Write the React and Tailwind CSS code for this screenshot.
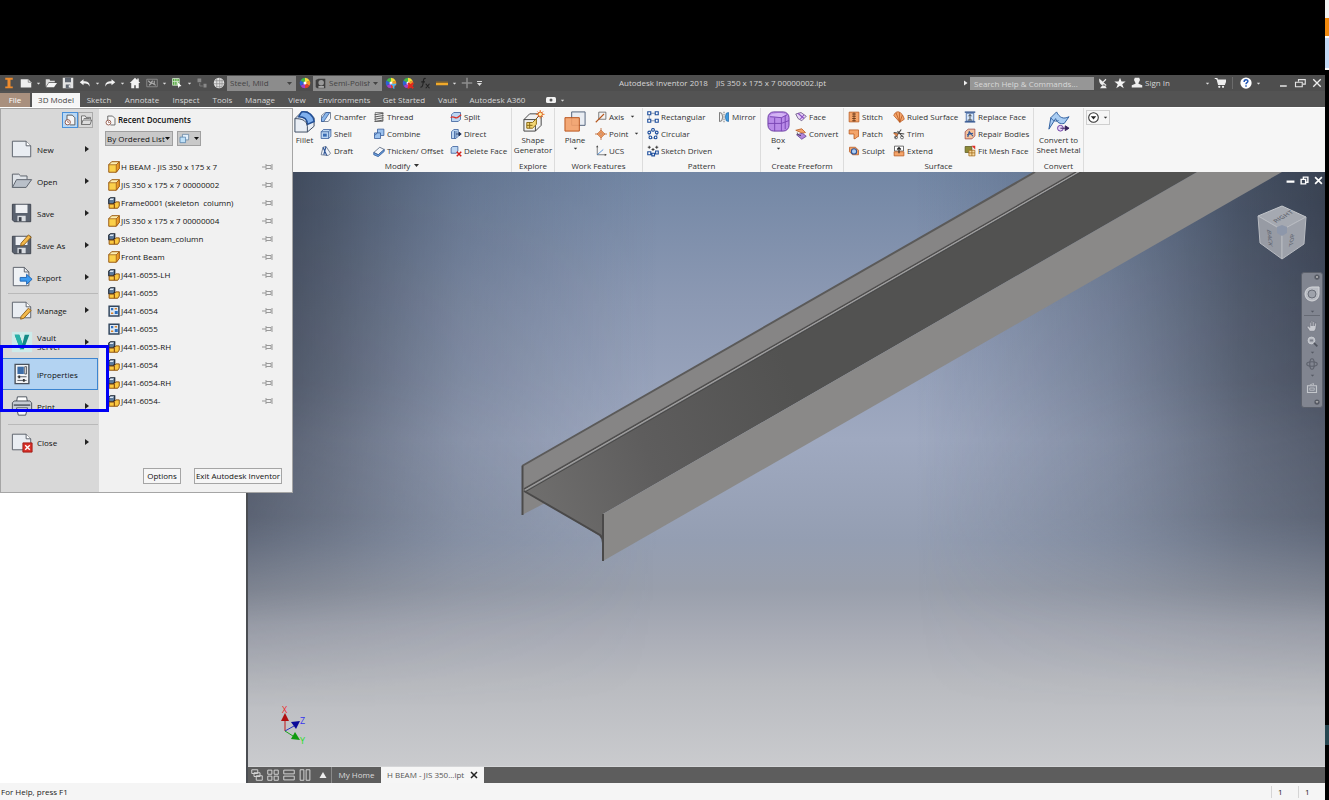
import React, { useState } from 'react';

const Svg = ({ size = 12, box = 16, children, className = '' }) => (
  <svg width={size} height={size} viewBox={`0 0 ${box} ${box}`} className={`shrink-0 ${className}`} fill="none" aria-hidden="true">
    {children}
  </svg>
);

const Caret = ({ className = '' }) => (
  <svg width="5" height="3" viewBox="0 0 5 3" className={`shrink-0 ${className}`} aria-hidden="true">
    <path d="M0 0h5L2.5 3z" fill="currentColor" />
  </svg>
);

const B = '#2f5597'; // outline blue
const L = '#bcd6f2'; // light blue face
const O = '#f4a56b'; // orange face
const D = '#b5561c'; // orange outline

/* ---------- ribbon icons ---------- */
const icons = {
  chamfer: <><path d="M2 6l5-4h7v8l-3 4H2z" fill="#f4f6f9" stroke="#54647c" /><path d="M2 10L8 2h5L5 14H2z" fill="#8db8ea" stroke={B} /></>,
  shell: <><path d="M1.5 5l3-3h10v9l-3 3h-10z" fill={L} stroke={B} /><path d="M1.5 5h10v9M11.500 5l3-3" stroke={B} /><path d="M4 7.500h5v4H4z" fill="#3b6db5" /></>,
  draft: <><path d="M1.500 13L4 3l4-1 6 9-3 3z" fill="#f0f3f8" stroke="#54647c" /><path d="M4 3l5 11M8 2l-3 11" stroke={B} strokeWidth="1.500" /></>,
  thread: <><path d="M3 2h10v12H3z" fill="#eee" stroke="#666" /><path d="M2 5l12-2M2 8l12-2M2 11l12-2M2 14l12-2" stroke="#555" strokeWidth="1.300" /></>,
  combine: <><path d="M6 1.500h8.500V10H10v4H2V6.500h4z" fill="#9cc2ee" stroke={B} /><path d="M6 6.500h4V10M6 6.500L2 10" stroke={B} /></>,
  thicken: <><path d="M1 10l8-7 6 3-8 7z" fill="#f5f7fa" stroke="#4a5a74" /><path d="M1 10v3l6 2.500 8-7V6l-8 7z" fill="#6fa5e0" stroke={B} /></>,
  split: <><path d="M2 5l3-3h9v9l-3 3H2z" fill={L} stroke={B} /><path d="M1 9c4-4 6 3 10-1l4-3" stroke="#d9332a" strokeWidth="1.800" /></>,
  direct: <><path d="M2 5l3-3h6v9l-3 3H2z" fill={L} stroke={B} /><path d="M6 4v10M8 4v9" stroke={B} /><path d="M8 8h6M12 5.500L15 8l-3 2.500z" stroke="#1b2f55" fill="#1b2f55" /></>,
  deleteFace: <><path d="M1.500 4l2-2h7v6l-2 3h-7z" fill={L} stroke={B} /><path d="M9 9l6 6M15 9l-6 6" stroke="#d3211b" strokeWidth="2" /></>,
  axis: <><path d="M5 1.500h9.500V11H5z" fill="#f4f4f4" stroke="#555" /><path d="M1 15L12 4" stroke={D} strokeWidth="1.500" /></>,
  point: <><path d="M8 0v16M0 8h16" stroke={D} /><path d="M8 3l5 5-5 5-5-5z" fill={O} stroke={D} /><circle cx="8" cy="8" r="1.500" fill="#fff" stroke={D} /></>,
  ucs: <><path d="M3 1v12h12" stroke="#555" /><path d="M3 13l8-7" stroke="#2b7ad1" /><path d="M1.500 3L3 .5 4.500 3zM13 11.500l2.500 1.500-2.500 1.500z" fill="#444" /></>,
  rectangular: <><path d="M4 3h8M4 13h8M3 4v8" stroke="#6b7d9b" /><g fill="#fff" stroke="#20509e" strokeWidth="1.500"><path d="M1 1h4v4H1zM11 1h4v4h-4zM1 11h4v4H1zM11 11h4v4h-4z" /></g></>,
  circular: <><circle cx="8" cy="8" r="5.500" stroke="#6b7d9b" /><g fill="#fff" stroke="#20509e" strokeWidth="1.500"><circle cx="8" cy="2.500" r="1.800" /><circle cx="3" cy="6" r="1.800" /><circle cx="13" cy="6" r="1.800" /><circle cx="4.500" cy="12.500" r="1.800" /><circle cx="11.500" cy="12.500" r="1.800" /></g></>,
  sketchDriven: <><path d="M3 1v4M1 3h4M8 4v4M6 6h4M13 1v4M11 3h4" stroke="#333" strokeWidth="1.200" /><g fill="#fff" stroke="#20509e" strokeWidth="1.500"><path d="M1 9h4v4H1zM6.500 11h3.500v3.500H6.500zM11.500 8H15v4h-3.500z" /></g></>,
  mirror: <><path d="M2 2v12l3-1 1-4V7L5 3z" fill="#f3f3f3" stroke="#555" /><path d="M8 1v14" stroke="#555" strokeDasharray="2 1" /><path d="M14 2v12l-3-1-1-4V7l1-4z" fill="#3e9be0" stroke="#2269aa" /></>,
  face: <><path d="M1 4l7-2 7 5-6 6-5-3z" fill="#e6d4f5" stroke="#5c4a78" /><path d="M4 3l8 7M12 5l-5 6" stroke="#8b51c4" strokeWidth="1.500" /></>,
  convert: <><path d="M1 3l8-2 5 5-4 1z" fill={O} stroke={D} /><path d="M2 9l8-2 5 4-6 4z" fill="#b287dd" stroke="#5f3e8f" /><path d="M3 6c0 3 2 4 5 4" stroke="#333" /></>,
  stitch: <><path d="M1.500 1.500h13v13h-13z" fill={O} stroke={D} /><path d="M8 2v12M5.500 4h5M5.500 7h5M5.500 10h5M5.500 13h5" stroke="#5a2c10" /></>,
  patch: <><path d="M1.500 2.500h12.500v9c-3 0-3 3-6 3V8H1.500z" fill={O} stroke={D} /></>,
  sculpt: <><path d="M2 3h8l4 4v6H6l-4-4z" fill={O} stroke={D} /><circle cx="8" cy="8.500" r="3.500" fill="#a9ccf5" stroke={B} strokeWidth="1.500" /></>,
  ruled: <><path d="M1 6C2 3 4 1 7 1c4 1 7 5 8 10l-6 4z" fill={O} stroke={D} /><path d="M9 15L4 2.500M9 15L8.500 2M9 15l3.500-9.500" stroke={D} /></>,
  trim: <><path d="M1 6l14 2M3 13L11 2" stroke="#444" strokeWidth="1.500" /><circle cx="4" cy="12.500" r="2" stroke="#444" /><circle cx="12" cy="12.500" r="2" stroke="#444" /><path d="M6 4l7 8" stroke="#444" strokeWidth="1.500" /><path d="M1 7l5 1-1 3z" fill={O} stroke={D} /></>,
  extend: <><path d="M2 1.500h12V8H2z" fill="#fff" stroke="#444" /><path d="M1.500 9h13v5.500h-13z" fill={O} stroke={D} /><path d="M8 11V4M5.500 6L8 3.500 10.500 6" stroke="#222" strokeWidth="1.500" /></>,
  replaceFace: <><path d="M3 3h10v10.500H3z" fill="#d4e6fb" stroke={B} /><path d="M1 1.500h14M1 14.500h14" stroke="#1f4585" strokeWidth="1.500" /><path d="M8 12V5M6 7l2-2.500L10 7M5 12h6" stroke="#222" /></>,
  repair: <><path d="M1.500 5l4-3.500h9v9l-4 4h-9z" fill="#f6c39c" stroke="#944" /><path d="M5 12l2-7 5 6M4 9l8-2" stroke={B} strokeWidth="1.500" /></>,
  fitMesh: <><path d="M1.500 2h9v8h-9z" fill="#8d8b38" stroke="#5a581f" /><path d="M6.500 7h8v7.500h-8z" fill="#f7dba0" stroke="#a06718" /><path d="M6.500 10.500h8M10.500 7v7.500" stroke="#a06718" /><path d="M10 1h5v5z" fill="#df2f24" /></>,
};

const Tool = ({ icon, label, caret }) => (
  <button className="flex h-[17px] shrink-0 items-center gap-[2px] whitespace-nowrap text-left">
    <Svg size={12}>{icons[icon]}</Svg>
    <span>{label}</span>
    {caret && <Caret className="ml-1 scale-75" />}
  </button>
);

const Group = ({ title, width, caret, children }) => (
  <section className={`flex shrink-0 flex-col border-r border-[#dcdcdc] ${width}`}>
    <div className="flex h-[51px]">{children}</div>
    <div className="flex h-[13px] items-center justify-center gap-1">
      {title}
      {caret && <Caret />}
    </div>
  </section>
);

const Col = ({ width = '', children }) => <div className={`flex shrink-0 flex-col ${width}`}>{children}</div>;

const BigTool = ({ width, children, lines, caret }) => (
  <button className={`flex shrink-0 flex-col items-center self-start pt-[2px] leading-[10px] ${width}`}>
    {children}
    {lines.map((l) => (
      <span key={l} className="whitespace-nowrap">{l}</span>
    ))}
    {caret && <Caret className="mt-[2px] scale-75" />}
  </button>
);

const Ribbon = () => (
  <div className="flex h-[65px] overflow-hidden border-t border-white bg-[#f6f6f6] pl-[293px] text-[#333]">
    <Group title="Modify" width="w-[219px]" caret>
      <BigTool width="w-[23px]" lines={['Fillet']}>
        <Svg size={23} box={24} className="mb-[2px]">
          <path d="M2 9l7-7h6l7 6v9l-7 6H2z" fill="#e9eef5" stroke="#3c4a61" />
          <path d="M9 2c7-1 12 3 13 10l-7 3c0-5-3-8-9-8z" fill="#7fb0ee" stroke="#214e96" strokeWidth="1.500" />
          <path d="M2 9c6 0 12 1 13 8v6" stroke="#3c4a61" />
        </Svg>
      </BigTool>
      <Col width="w-[57px] pl-1">
        <Tool icon="chamfer" label="Chamfer" />
        <Tool icon="shell" label="Shell" />
        <Tool icon="draft" label="Draft" />
      </Col>
      <Col width="w-[77px]">
        <Tool icon="thread" label="Thread" />
        <Tool icon="combine" label="Combine" />
        <Tool icon="thicken" label="Thicken/ Offset" />
      </Col>
      <Col>
        <Tool icon="split" label="Split" />
        <Tool icon="direct" label="Direct" />
        <Tool icon="deleteFace" label="Delete Face" />
      </Col>
    </Group>

    <Group title="Explore" width="w-[43px]">
      <BigTool width="w-[42px]" lines={['Shape', 'Generator']}>
        <Svg size={23} box={24} className="mb-[2px]">
          <path d="M2 10l6-6h12v12l-6 6H2z" fill="#f1f1f1" stroke="#444" />
          <path d="M2 10h12v12M14 10l6-6" stroke="#444" />
          <path d="M5 13h6l4-4v6l-4 4H5z" fill="#f2d675" stroke="#8a6a13" />
          <path d="M5 16h6M8 13v6" stroke="#8a6a13" />
          <path d="M19 0v9M14.500 4.500h9M16 1.500l6 6M22 1.500l-6 6" stroke="#e8731c" />
          <circle cx="19" cy="4.500" r="2.300" fill="#fff3a8" stroke="#d8541a" />
        </Svg>
      </BigTool>
    </Group>

    <Group title="Work Features" width="w-[88px]">
      <BigTool width="w-[40px]" lines={['Plane']} caret>
        <Svg size={23} box={24} className="mb-[2px]">
          <path d="M8 2h14v14H8z" fill="#e9edf3" stroke="#52617a" />
          <path d="M1 8h15v14H1z" fill="#f3a068" stroke="#b9531a" fillOpacity=".9" />
        </Svg>
      </BigTool>
      <Col>
        <Tool icon="axis" label="Axis" caret />
        <Tool icon="point" label="Point" caret />
        <Tool icon="ucs" label="UCS" />
      </Col>
    </Group>

    <Group title="Pattern" width="w-[118px]">
      <Col width="w-[75px] pl-1">
        <Tool icon="rectangular" label="Rectangular" />
        <Tool icon="circular" label="Circular" />
        <Tool icon="sketchDriven" label="Sketch Driven" />
      </Col>
      <Col>
        <Tool icon="mirror" label="Mirror" />
      </Col>
    </Group>

    <Group title="Create Freeform" width="w-[83px]">
      <BigTool width="w-[34px]" lines={['Box']} caret>
        <Svg size={23} box={24} className="mb-[2px]">
          <rect x="1" y="2" width="22" height="20" rx="6" fill="#b98be8" stroke="#6a3ba1" />
          <path d="M3 6c2-3 14-4 17-1l-5 3c-4-1-8-1-12-2z" fill="#d3b4f4" />
          <path d="M1 14h14l8-3M8 8v14M15 8v14M19 6v14M3 7l12 1 6-3" stroke="#7a47b5" />
        </Svg>
      </BigTool>
      <Col>
        <Tool icon="face" label="Face" />
        <Tool icon="convert" label="Convert" />
      </Col>
    </Group>

    <Group title="Surface" width="w-[190px]">
      <Col width="w-[49px] pl-1">
        <Tool icon="stitch" label="Stitch" />
        <Tool icon="patch" label="Patch" />
        <Tool icon="sculpt" label="Sculpt" />
      </Col>
      <Col width="w-[71px]">
        <Tool icon="ruled" label="Ruled Surface" />
        <Tool icon="trim" label="Trim" />
        <Tool icon="extend" label="Extend" />
      </Col>
      <Col>
        <Tool icon="replaceFace" label="Replace Face" />
        <Tool icon="repair" label="Repair Bodies" />
        <Tool icon="fitMesh" label="Fit Mesh Face" />
      </Col>
    </Group>

    <Group title="Convert" width="w-[50px]">
      <BigTool width="w-[49px]" lines={['Convert to', 'Sheet Metal']}>
        <Svg size={23} box={24} className="mb-[2px]">
          <path d="M2 20L4 8l6-6c3 6 7 8 13 5l-5 7c-4 1-8-1-9-5z" fill="#a9cdf3" stroke="#2f5f9f" />
          <path d="M4 8c2 4 6 4 8 3" stroke="#2f5f9f" />
          <circle cx="14" cy="19" r="3" fill="#e5d4f7" stroke="#6a3ba1" />
          <path d="M14 19h8M19 16.500l4 2.500-4 2.500z" stroke="#35205c" fill="#35205c" />
        </Svg>
      </BigTool>
    </Group>

    <button aria-label="Ribbon options" className="ml-[2px] mt-[2px] flex h-[15px] w-6 items-center justify-center gap-1 border border-[#cfcfcf]">
      <Svg size={11}>
        <circle cx="8" cy="8" r="7" fill="#fff" stroke="#333" strokeWidth="1.500" />
        <path d="M4 6h8l-4 5z" fill="#222" />
      </Svg>
      <Caret className="scale-75" />
    </button>
  </div>
);

/* ---------- title bar ---------- */
const Slot = ({ label, children }) => (
  <button aria-label={label} className="flex h-full w-[17px] shrink-0 items-center justify-center">
    <Svg size={12}>{children}</Svg>
  </button>
);

const CaretSlot = ({ label }) => (
  <button aria-label={label} className="flex h-full w-2 shrink-0 items-center justify-center text-[#ddd]">
    <Caret className="scale-75" />
  </button>
);

const Wheel = () => (
  <>
    <path d="M8 8V1a7 7 0 0 1 6 3.500z" fill="#f6e13a" />
    <path d="M8 8l6-3.500a7 7 0 0 1 0 7z" fill="#f39a27" />
    <path d="M8 8l6 3.500A7 7 0 0 1 8 15z" fill="#e2402b" />
    <path d="M8 8v7a7 7 0 0 1-6-3.500z" fill="#a340c8" />
    <path d="M8 8l-6 3.500a7 7 0 0 1 0-7z" fill="#2c62d6" />
    <path d="M8 8L2 4.500A7 7 0 0 1 8 1z" fill="#42b94c" />
    <circle cx="8" cy="8" r="2" fill="#fff" />
  </>
);

const TitleSelect = ({ label, value, icon }) => (
  <div className="relative flex h-[15px] w-[69px] shrink-0 items-center bg-[#8c8c8c] text-[#444]">
    {icon}
    <select aria-label={label} className="mr-3 h-full min-w-0 flex-1 appearance-none overflow-hidden text-clip pl-[3px] outline-none">
      <option>{value}</option>
    </select>
    <Caret className="pointer-events-none absolute right-1" />
  </div>
);

const TitleBar = () => (
  <header className="flex h-4 items-center bg-[#4e4e4e] text-[#d6d6d6]">
    <Slot label="Application"><path d="M3 1h10v2.500h-3v9h3V15H3v-2.500h3v-9H3z" fill="#ee8b2d" /></Slot>
    <Slot label="New"><path d="M1 3h10l4 4v7H1z" fill="#eee" /><path d="M11 3v4h4" stroke="#777" /></Slot>
    <CaretSlot label="New options" />
    <Slot label="Open"><path d="M1 13V3h5l1 2h6v2H5z" fill="#ddd" /><path d="M5 8h11l-4 5.500H1.500z" fill="#f5f5f5" /></Slot>
    <Slot label="Save"><path d="M1 1h14v14H1z" fill="#e4e4e4" /><path d="M4 1h8v6H4zM5 10h6v5H5z" fill="#5f6670" /><path d="M9 11h2v3H9z" fill="#eee" /></Slot>
    <Slot label="Undo"><path d="M6 3L1 7l5 4V8.500c4 0 7 0 8 4.500 1-6-3-7.500-8-7.500z" fill="#f2f2f2" /></Slot>
    <CaretSlot label="Undo options" />
    <Slot label="Redo"><path d="M10 3l5 4-5 4V8.500c-4 0-7 0-8 4.500-1-6 3-7.500 8-7.500z" fill="#f2f2f2" /></Slot>
    <CaretSlot label="Redo options" />
    <Slot label="Home"><path d="M8 1L1 8h2v7h4v-4h2v4h4V8h2l-2-2V2h-2v2z" fill="#f2f2f2" /></Slot>
    <Slot label="Appearance"><path d="M1 3h14v10H1z" stroke="#999" /><path d="M3 5l3 3 3-3M4 11l4-3 5 3M11 5v5" stroke="#aaa" strokeWidth="1.500" /></Slot>
    <CaretSlot label="Appearance options" />
    <Slot label="Select"><path d="M2 2h9v9H2z" fill="#58a943" stroke="#d7ead1" /><path d="M5 2v9M8 2v9M2 6h9" stroke="#d7ead1" /><path d="M8 6l6 6-3 .5L10 15z" fill="#fff" /></Slot>
    <CaretSlot label="Select options" />
    <Slot label="Relationships"><path d="M2 2h5v5H2zM10 9h4v5h-4z" fill="#898989" /><path d="M5 8v4h4" stroke="#898989" /></Slot>
    <Slot label="Material"><circle cx="8" cy="8" r="7" fill="#e4e4e4" /><path d="M2 5h12M1 9h14M4 13h8M5 2v12M9 1v14M12 3v10" stroke="#8b8b8b" /></Slot>
    <TitleSelect label="Material" value="Steel, Mild" />
    <Slot label="Color"><Wheel /></Slot>
    <TitleSelect
      label="Appearance"
      value="Semi-Polished"
      icon={<Svg size={11} className="ml-[2px]"><path d="M1 3l4-2h10v14H3L1 13z" fill="#3e3e3e" /><circle cx="9" cy="7" r="4" fill="#999" /><path d="M5 13h8" stroke="#ccc" strokeWidth="2" /></Svg>}
    />
    <Slot label="Adjust"><Wheel /><path d="M7 9h9l-3.500 3v4l-2-1v-3z" fill="#49b4ee" /></Slot>
    <Slot label="Clear"><Wheel /><path d="M8 8l7 7M15 8l-7 7" stroke="#e1261c" strokeWidth="2.500" /></Slot>
    <Slot label="Parameters"><path d="M9 2C6 1 6 4 5.500 8S4 14 2 13.500M3 6.500h5M9 9l5 6M14 9l-5 6" stroke="#222" strokeWidth="1.500" /></Slot>
    <Slot label="Measure"><path d="M0 6h16v2H0z" fill="#8d6a2c" /><path d="M0 8h16v3H0z" fill="#f0a92a" /></Slot>
    <CaretSlot label="Measure options" />
    <Slot label="Add"><path d="M8 1v14M1 8h14" stroke="#8e8e8e" strokeWidth="2" /></Slot>
    <button aria-label="Customize" className="flex w-2 flex-col items-center gap-[1px] text-[#ddd]"><span className="h-px w-[5px] bg-[#ddd]" /><Caret /></button>

    <h1 className="flex flex-1 items-center justify-center gap-2 whitespace-nowrap">
      <span>Autodesk Inventor 2018</span>
      <span>JIS 350 x 175 x 7 00000002.ipt</span>
    </h1>

    <Svg size={8}><path d="M4 3l7 5-7 5z" fill="#eee" /></Svg>
    <input aria-label="Search help" placeholder="Search Help &amp; Commands..." className="h-[13px] w-[124px] bg-[#969696] px-1 outline-none placeholder:text-[#d8d8d8]" />
    <Slot label="Connect"><path d="M3 2l10 9c-6 2-11-2-10-9zM8 10l-4 5h9l-3-5z" fill="#eee" /><path d="M8 7l4-4" stroke="#eee" strokeWidth="1.500" /></Slot>
    <Slot label="Favorites"><path d="M8 1l2 5h5.500L11 9.500l2 5.500-5-3.500L3 15l2-5.500L.5 6H6z" fill="#f4f4f4" /></Slot>
    <Slot label="Account"><path d="M5 1h6l1 3-2 4v1l5 2v3H1v-3l5-2V8L4 4z" fill="#eee" /></Slot>
    <button className="w-[58px] text-left">Sign In</button>
    <CaretSlot label="Account options" />
    <Slot label="Store"><path d="M1 2h3l2 8h8l2-6H5" fill="#eee" stroke="#eee" strokeWidth="1.500" /><circle cx="7" cy="13" r="1.500" fill="#eee" /><circle cx="12" cy="13" r="1.500" fill="#eee" /></Slot>
    <span className="mx-1 h-3 w-px bg-[#6b6b6b]" />
    <Slot label="Help"><circle cx="8" cy="8" r="7.500" fill="#fff" /><path d="M5.500 6.500c0-4 5-3.500 5-1 0 2-2.500 2-2.500 4M8 11v2" stroke="#2257b5" strokeWidth="2" /></Slot>
    <CaretSlot label="Help options" />
    <div className="ml-3 flex h-full">
      <Slot label="Minimize"><path d="M4 12h9" stroke="#e5e5e5" strokeWidth="2" /></Slot>
      <Slot label="Restore"><path d="M6 6V3.500h9v6h-3M2 7h9v6H2z" stroke="#e5e5e5" strokeWidth="1.500" /></Slot>
      <Slot label="Close"><path d="M3 3l10 10M13 3L3 13" stroke="#eee" strokeWidth="1.800" /></Slot>
    </div>
  </header>
);

const tabs = [
  ['Sketch', 'w-[38px]'], ['Annotate', 'w-[48px]'], ['Inspect', 'w-[40px]'], ['Tools', 'w-[33px]'],
  ['Manage', 'w-[42px]'], ['View', 'w-[32px]'], ['Environments', 'w-[63px]'], ['Get Started', 'w-[56px]'],
  ['Vault', 'w-[31px]'], ['Autodesk A360', 'w-[69px]'],
];

const TabBar = () => (
  <nav className="flex h-4 items-stretch bg-[#535353] pt-[2px] text-[#d6d6d6]">
    <button className="w-[30px] bg-[#a9907e] text-white">File</button>
    <button className="ml-[2px] w-12 whitespace-nowrap bg-[#f6f6f6] text-[#444]">3D Model</button>
    {tabs.map(([name, w]) => (
      <button key={name} className={`whitespace-nowrap ${w}`}>{name}</button>
    ))}
    <button aria-label="Ribbon display" className="ml-[14px] flex items-center gap-1">
      <svg width="10" height="6" viewBox="0 0 10 6" aria-hidden="true"><rect width="10" height="6" rx="1.500" fill="#f2f2f2" /><circle cx="5" cy="3" r="1.500" fill="#555" /></svg>
      <Caret className="scale-75" />
    </button>
  </nav>
);

/* ---------- file menu ---------- */
const page = <path d="M1.500 3.500h15l5 5v12h-20z" fill="#e9edf2" stroke="#555c66" />;
const floppy = (
  <>
    <path d="M1.500 2.500h20v19h-18l-2-2z" fill="#5a626f" stroke="#3b414b" />
    <path d="M5 3h13v9H5z" fill="#eef0f3" />
    <path d="M7 15h9v6H7z" fill="#d9dde2" />
    <path d="M8.500 16.500h3V21h-3z" fill="#3b414b" />
  </>
);
const pencil = <path d="M11 15l8-9 3 2.500-8 8.500-3.500 1z" fill="#f3b94b" stroke="#8d5c14" />;

const menuIcons = {
  New: <>{page}<path d="M16.500 3.500v5h5" fill="#fff" stroke="#555c66" /></>,
  Open: <><path d="M1.500 19V4.500h7l2 2h7V10" fill="#dfe3e8" stroke="#555c66" /><path d="M6 10.500h16.500l-6 8.500h-15z" fill="#b9c0c9" stroke="#555c66" /></>,
  Save: floppy,
  'Save As': <>{floppy}<g transform="translate(0 -5)">{pencil}</g></>,
  Export: <><path d="M2.500 1.500h12l5 5v15h-17z" fill="#eff2f5" stroke="#555c66" /><path d="M14.500 1.500v5h5" stroke="#555c66" /><path d="M10 12.500h7V9l6 5.500-6 5.500v-3.500h-7z" fill="#3b9bf1" stroke="#1b63b2" /></>,
  Manage: <>{page}<path d="M16.500 3.500v5h5" fill="#fff" stroke="#555c66" /><g transform="translate(0 4)">{pencil}</g></>,
  'Vault Server': <><path d="M1 1h22v22H1z" fill="#cdebea" /><path d="M4 4h5l3.500 10L15 4h5l-6 16h-4z" fill="#128a86" /><path d="M4 4h5l3.500 10L11 20h-1z" fill="#26b2a8" /></>,
  iProperties: <><path d="M4.500 1.500h15v21h-15z" fill="#f2f4f6" stroke="#4a515c" strokeWidth="1.500" /><path d="M7 4h7v8H7z" fill="#3d6da8" /><path d="M15 4h2v8h-2zM7 15h10M7 19h10" stroke="#4a515c" /><path d="M9 13.500v3M14 17.500v3" stroke="#333" strokeWidth="2" /></>,
  Print: <><path d="M6 8l1-6h10l1 6" fill="#fff" stroke="#444b55" /><path d="M1.500 8.500l2-2h17l2 2v8h-21z" fill="#c6ccd4" stroke="#444b55" /><path d="M6 14h12l-2 8H8z" fill="#f6f7f8" stroke="#444b55" /><path d="M3 11h18" stroke="#444b55" strokeWidth="1.500" /></>,
  Close: <>{page}<path d="M16.500 3.500v5h5" fill="#fff" stroke="#555c66" /><path d="M13 13h10v10H13z" fill="#d8312a" stroke="#a01914" /><path d="M15.500 15.500l5 5M20.500 15.500l-5 5" stroke="#fff" strokeWidth="1.500" /></>,
};

const MenuItem = ({ name, active, onPick }) => (
  <button
    onClick={() => onPick(name)}
    className={`flex h-8 w-full items-center border pl-2 text-left leading-[9px] ${
      active ? 'border-[#3d85d0] bg-[#b3d3f2]' : 'border-transparent'
    }`}
  >
    <Svg size={22} box={24}>{menuIcons[name]}</Svg>
    <span className="ml-1 w-[42px]">{name}</span>
    {name !== 'iProperties' && (
      <svg width="4" height="6" viewBox="0 0 4 6" className="ml-[6px]" aria-hidden="true"><path d="M0 0l4 3-4 3z" fill="#222" /></svg>
    )}
  </button>
);

const docs = [
  ['part', 'H BEAM - JIS 350 x 175 x 7'],
  ['part', 'JIS 350 x 175 x 7 00000002'],
  ['asm', 'Frame0001 (skeleton  column)'],
  ['part', 'JIS 350 x 175 x 7 00000004'],
  ['asm', 'Skleton beam_column'],
  ['part', 'Front Beam'],
  ['asm', 'J441-6055-LH'],
  ['asm', 'J441-6055'],
  ['dwg', 'J441-6054'],
  ['dwg', 'J441-6055'],
  ['asm', 'J441-6055-RH'],
  ['asm', 'J441-6054'],
  ['asm', 'J441-6054-RH'],
  ['asm', 'J441-6054-'],
];

const docIcons = {
  part: <><path d="M1 5l4-4h10v9l-4 5H1z" fill="#fbd04a" stroke="#9a5a14" strokeWidth="1.300" /><path d="M5 1h10l-4 4H1z" fill="#fdeeb0" stroke="#9a5a14" /><path d="M11 5l4-4v9l-4 5z" fill="#eb9c2a" stroke="#9a5a14" /></>,
  asm: <><path d="M1 3l2.500-2H9v6L7 9H1z" fill="#5c7a9c" stroke="#18222f" strokeWidth="1.500" /><path d="M3 2h5L6.500 4H2z" fill="#dfe8f2" /><path d="M1.500 9.500h7V15h-7zM8.500 9l2-2.500H15V12l-2 3H8.500z" fill="#fbc83f" stroke="#8f5410" strokeWidth="1.300" /></>,
  dwg: <><path d="M1.500 1.500h13v13h-13z" fill="#dce8f5" stroke="#33475f" strokeWidth="2" /><path d="M4 4h3v3H4zM9 8h4v4H9z" fill="#2d6fbf" /><path d="M9 4h3v2H9zM4 10h3v2H4z" fill="#d9832b" /></>,
};

const folderPage = (
  <>
    <path d="M4 9V1.500h7l3.500 3.500v9.500H8" fill="#f5f5f5" stroke="#555" strokeWidth="1.200" />
    <circle cx="5" cy="11" r="3.500" fill="#fff" stroke="#8b4a3a" strokeWidth="1.200" />
    <path d="M5 9v2h2" stroke="#8b4a3a" />
  </>
);

const FileMenu = () => {
  const [selected, setSelected] = useState('iProperties');
  const item = (name) => <MenuItem key={name} name={name} active={selected === name} onPick={setSelected} />;

  return (
    <div className="absolute left-0 top-px z-10 flex h-[385px] w-[293px] border border-[#a5a5a5] bg-[#f1f1f1] text-[#111]">
      <div className="w-[98px] shrink-0 bg-[#d8d8d8]">
        <div className="mb-[5px] ml-[61px] mt-[3px] flex h-4">
          <button aria-label="Recent documents" className="flex w-4 items-center justify-center border border-[#4a90d9] bg-[#b9d8f5]"><Svg size={12}>{folderPage}</Svg></button>
          <button aria-label="Open documents" className="flex w-[15px] items-center justify-center border border-[#aaa]">
            <Svg size={12}><path d="M2 14V2.500h5l1 2h6V7" fill="#eee" stroke="#555" /><path d="M4 8h11.500l-2 6H2zM5 6h8" fill="#ddd" stroke="#555" /></Svg>
          </button>
        </div>
        <div className="pl-px pr-px">
          {['New', 'Open', 'Save', 'Save As', 'Export'].map(item)}
          <hr className="ml-[6px] border-[#b9b9b9]" />
          {['Manage', 'Vault Server', 'iProperties', 'Print'].map(item)}
          <hr className="mb-px ml-[6px] mt-[2px] border-[#b9b9b9]" />
          {item('Close')}
        </div>
      </div>

      <div className="flex flex-1 flex-col pl-[6px] pr-[10px] pt-1">
        <h2 className="flex h-[14px] items-center gap-[2px] font-semibold">
          <Svg size={11}>{folderPage}</Svg>Recent Documents
        </h2>
        <div className="mb-3 mt-1 flex gap-1">
          <div className="relative flex h-[15px] w-[68px] items-center border border-[#a0a0a0] bg-[#c9c9c9]">
            <select aria-label="Sort order" className="h-full w-full appearance-none pl-px outline-none"><option>By Ordered List</option></select>
            <Caret className="pointer-events-none absolute right-[2px]" />
          </div>
          <button aria-label="Icon size" className="flex h-[15px] w-6 items-center justify-center gap-1 border border-[#a0a0a0] bg-[#c9c9c9]">
            <Svg size={11}><path d="M5 2h9v8H5z" fill="#e4f0fb" stroke="#5b7c9c" /><path d="M1.500 6h8v8h-8z" fill="#bfe0f7" stroke="#4a7ba8" /></Svg>
            <Caret />
          </button>
        </div>
        <ul className="pl-[3px]">
          {docs.map(([type, name], i) => (
            <li key={i} className="flex h-[18px] items-center gap-px pr-[9px]">
              <Svg size={12}>{docIcons[type]}</Svg>
              <a href="#" className="flex-1 whitespace-pre">{name}</a>
              <button aria-label={`Pin ${name}`}>
                <svg width="11" height="8" viewBox="0 0 11 8" fill="none" aria-hidden="true"><path d="M0 4h4M4 1v6M4 2.500h5v3H4M10 1v6" stroke="#999" /></svg>
              </button>
            </li>
          ))}
        </ul>
        <div className="mb-2 mt-auto flex justify-end gap-[13px]">
          <button className="h-4 w-[38px] border border-[#a5a5a5] bg-[#f6f6f6]">Options</button>
          <button className="h-4 w-[88px] whitespace-nowrap border border-[#a5a5a5] bg-[#f6f6f6]">Exit Autodesk Inventor</button>
        </div>
      </div>
      {/* highlight frame round iProperties */}
      <div className="pointer-events-none absolute -left-px top-[236px] h-[67px] w-[109px] border-3 border-[#0000f5]" />
    </div>
  );
};

/* ---------- model view ---------- */
const Scene = () => (
  <svg className="absolute inset-0 h-full w-full" viewBox="248 172 1077 595" preserveAspectRatio="xMinYMin slice" aria-label="H beam model">
    <defs>
      <linearGradient id="sky" x1="0" y1="0" x2="0" y2="1">
        <stop offset="0" stopColor="#7387a5" />
        <stop offset=".22" stopColor="#8c99b3" />
        <stop offset=".45" stopColor="#9fa9c0" />
        <stop offset=".62" stopColor="#949eb2" />
        <stop offset=".7" stopColor="#999fac" />
        <stop offset=".78" stopColor="#aaadb7" />
        <stop offset=".86" stopColor="#b9bbc0" />
        <stop offset="1" stopColor="#cacbce" />
      </linearGradient>
      <linearGradient id="sides">
        <stop offset="0" stopColor="#2a303d" stopOpacity=".82" />
        <stop offset=".08" stopColor="#2c3340" stopOpacity=".6" />
        <stop offset=".2" stopColor="#3a4558" stopOpacity=".28" />
        <stop offset=".38" stopColor="#4a5870" stopOpacity="0" />
        <stop offset=".62" stopColor="#4a5870" stopOpacity="0" />
        <stop offset=".8" stopColor="#3a4558" stopOpacity=".35" />
        <stop offset=".92" stopColor="#2c3340" stopOpacity=".65" />
        <stop offset="1" stopColor="#2a303d" stopOpacity=".8" />
      </linearGradient>
      <linearGradient id="fade" x1="0" y1="0" x2="0" y2="1">
        <stop offset="0" stopColor="#fff" />
        <stop offset=".35" stopColor="#e4e4e4" />
        <stop offset=".58" stopColor="#aaa" />
        <stop offset=".68" stopColor="#5c5c5c" />
        <stop offset=".76" stopColor="#242424" />
        <stop offset=".9" stopColor="#000" />
      </linearGradient>
      <mask id="fadeMask" maskUnits="userSpaceOnUse" x="248" y="172" width="1077" height="595">
        <rect x="248" y="172" width="1077" height="595" fill="url(#fade)" />
      </mask>
      <linearGradient id="web" gradientUnits="userSpaceOnUse" x1="525" y1="500" x2="800" y2="400">
        <stop offset="0" stopColor="#706f6e" />
        <stop offset=".45" stopColor="#5e5d5d" />
        <stop offset="1" stopColor="#525251" />
      </linearGradient>
    </defs>
    <rect x="248" y="172" width="1077" height="595" fill="url(#sky)" />
    <rect x="248" y="172" width="1077" height="595" fill="url(#sides)" mask="url(#fadeMask)" />

    {/* beam */}
    <path d="M522 466L1035 172h45L525 491v1l20 11-23 12z" fill="#868585" />
    <path d="M525 491L1080 172h117L603 514v24z" fill="url(#web)" />
    <path d="M603 514L1197 172h85L603 561z" fill="#8a8988" />
    <g fill="none">
      <path d="M522 466L1035 172" stroke="#5b5a59" strokeWidth="2" />
      <path d="M522.500 466v49" stroke="#4c4b4b" strokeWidth="2" />
      <path d="M524 489L1076 172" stroke="#4f4e4e" strokeWidth="1.500" />
      <path d="M525 490L1080 171" stroke="#a3a2a1" strokeWidth="1" />
      <path d="M525 492L1083 171" stroke="#4a4a49" strokeWidth="1" />
      <path d="M524 491l76 44q3 3 3 8" stroke="#4a4949" strokeWidth="2" />
      <path d="M603 514v47" stroke="#4a4949" strokeWidth="2" />
    </g>

    {/* axis triad */}
    <path d="M285 731v-14" stroke="#c01818" />
    <path d="M281 721l4-8 4 8z" fill="#b00f0f" />
    <path d="M285 731l9-5" stroke="#2a35c0" />
    <path d="M291 722l9-1-4 8z" fill="#0a0a99" />
    <path d="M285 731l8 5" stroke="#1ba31b" />
    <path d="M295 732l5 8-9-1z" fill="#0f9a0f" />
    <g fontSize="9">
      <text x="282" y="713" fill="#ee2a2a">X</text>
      <text x="300" y="724" fill="#3535ee">Z</text>
      <text x="300" y="744" fill="#25e025">Y</text>
    </g>
  </svg>
);

const ViewCube = () => (
  <svg width="52" height="56" viewBox="0 0 52 56" className="absolute right-[17px] top-[33px]" aria-label="View cube">
    <path d="M26 1l24 11-24 13L2 11z" fill="#a5a9b1" stroke="#c3c6cb" />
    <path d="M2 11l24 14v29L4 38z" fill="#979ba4" stroke="#b8bbc1" />
    <path d="M50 12L26 25v29l22-15z" fill="#9da1aa" stroke="#b8bbc1" />
    <path d="M21 22l5-2 5 2v6l-5 3-5-3z" fill="#8d97aa" />
    <g fontSize="7" fontWeight="600" fill="#666a74">
      <text transform="matrix(.85 -.5 .7 .5 20 18)">RIGHT</text>
      <text transform="matrix(.1 .9 -.8 -.4 11 24)">BACK</text>
      <text transform="matrix(.1 -.9 .8 -.4 37 40)">TOP</text>
    </g>
  </svg>
);

const NavBar = () => (
  <div className="absolute right-[2px] top-[100px] flex h-[136px] w-[22px] flex-col items-center rounded-[3px] border border-[#5b606b] bg-[#818590] text-[#555963]">
    <button aria-label="Close navigation bar" className="mr-[2px] mt-px self-end"><Svg size={6}><circle cx="8" cy="8" r="7" fill="#555963" /><path d="M5 5l6 6M11 5l-6 6" stroke="#bbb" strokeWidth="2" /></Svg></button>
    <button aria-label="Steering wheel" className="mt-[6px]"><Svg size={16}><path d="M1 8a7 7 0 0 1 7-7h7v7A7 7 0 0 1 1 8z" fill="#b9bcc3" stroke="#d4d6da" /><circle cx="8" cy="8" r="4" fill="#9ea2ab" stroke="#6a6e78" /></Svg></button>
    <Caret className="mt-2 scale-75" />
    <span className="mt-[2px] h-px w-4 bg-[#666a74]" />
    <button aria-label="Pan" className="mt-1"><Svg size={12}><path d="M5 15L1 9l2-1 2 2V3h2v5V1h2v7V2h2v6l1-4h2l-1 8-2 3z" fill="#c8cad0" stroke="#666a74" strokeWidth=".7" /></Svg></button>
    <button aria-label="Zoom" className="mt-1"><Svg size={11}><circle cx="6.500" cy="6.500" r="5" fill="#b9bcc3" stroke="#d4d6da" /><path d="M10 10l5 5" stroke="#50545e" strokeWidth="2.500" /><path d="M4 5h5v3H4z" fill="#7d818b" /></Svg></button>
    <Caret className="mt-1 scale-75" />
    <button aria-label="Orbit" className="mt-1"><Svg size={12}><ellipse cx="8" cy="8" rx="7" ry="3" stroke="#5d616c" strokeWidth="1.500" /><ellipse cx="8" cy="8" rx="3" ry="7" stroke="#5d616c" strokeWidth="1.500" /></Svg></button>
    <Caret className="mt-1 scale-75" />
    <button aria-label="Look at" className="mt-[5px]"><Svg size={12}><path d="M2 5h12v9H2z" stroke="#c3c6cb" strokeWidth="1.500" /><path d="M5 8h6v3H5zM5 4l5-2v2" stroke="#c3c6cb" /></Svg></button>
    <button aria-label="Navigation options" className="mb-[2px] mr-[2px] mt-auto self-end"><Svg size={6}><circle cx="8" cy="8" r="7" fill="#555963" /><path d="M4 6h8l-4 5z" fill="#bbb" /></Svg></button>
  </div>
);

const ModelView = () => (
  <main className="relative min-h-[595px] flex-1 overflow-hidden border-b border-[#d5d6d8]">
    <Scene />
    <div className="absolute right-0 top-[2px] flex h-[13px]">
      <button aria-label="Minimize document" className="flex w-[14px] items-center justify-center"><Svg size={9}><path d="M1 10h14" stroke="#fff" strokeWidth="4" /></Svg></button>
      <button aria-label="Restore document" className="flex w-[14px] items-center justify-center"><Svg size={9}><path d="M6 5V2h8v9h-3M2 6h8v8H2z" stroke="#fff" strokeWidth="2.500" /></Svg></button>
      <button aria-label="Close document" className="flex w-[14px] items-center justify-center"><Svg size={9}><path d="M2 2l12 12M14 2L2 14" stroke="#fff" strokeWidth="3" /></Svg></button>
    </div>
    <ViewCube />
    <NavBar />
  </main>
);

const viewModes = [
  ['Cascade', <path key="c" d="M1 1h8v5H1zM4 5h8v5H4zM7 9h8v6H7z" />],
  ['Tile', <path key="t" d="M1 1.500h5.500V7H1zM9.500 1.500H15V7H9.500zM1 9.500h5.500V15H1zM9.500 9.500H15V15H9.500z" />],
  ['Rows', <path key="r" d="M1 1.500h14v5H1zM1 9.500h14v5H1z" />],
  ['Columns', <path key="l" d="M1.500 1h5v14h-5zM9.500 1h5v14h-5z" />],
];

const DocTabs = () => (
  <div className="flex h-4 items-stretch bg-[#5d5d5d] text-[#dcdcdc]">
    <div className="flex items-center gap-1 pl-[3px]">
      {viewModes.map(([name, shape]) => (
        <button key={name} aria-label={name}>
          <Svg size={12}><g fill="#5d5d5d" stroke="#d5d5d5" strokeWidth="1.300">{shape}</g></Svg>
        </button>
      ))}
      <button aria-label="Show tabs" className="flex w-4 justify-center"><Svg size={8}><path d="M1 14L8 2l7 12z" fill="#eee" /></Svg></button>
    </div>
    <button className="w-[50px] whitespace-nowrap border-l border-[#8a8a8a]">My Home</button>
    <div className="flex w-[103px] items-center justify-between bg-[#f6f6f6] px-[6px] text-[#555]">
      <button className="whitespace-nowrap">H BEAM - JIS 350...ipt</button>
      <button aria-label="Close tab"><Svg size={8}><path d="M2 2l12 12M14 2L2 14" stroke="#222" strokeWidth="3" /></Svg></button>
    </div>
  </div>
);

export default function App() {
  return (
    <div className="flex min-h-screen bg-black font-['Open_Sans','Noto_Sans',sans-serif] text-[8px] leading-[12px]">
      <div className="flex min-w-0 flex-1 flex-col">
        <div className="h-[75px] bg-black" />
        <TitleBar />
        <TabBar />
        <div className="relative flex flex-1 flex-col">
          <FileMenu />
          <Ribbon />
          <div className="flex flex-1 bg-white pl-[246px]">
            <div className="flex min-w-0 flex-1 flex-col border-l-2 border-[#4a4d52]">
              <ModelView />
              <DocTabs />
            </div>
          </div>
        </div>
        <footer className="flex h-[17px] items-center bg-[#f5f5f5] pl-px text-[#222]">
          <span className="flex-1">For Help, press F1</span>
          <span className="w-[27px] border-l border-[#d5d5d5] pl-[6px]">1</span>
          <span className="w-[27px] border-l border-[#d5d5d5] pl-[6px]">1</span>
        </footer>
      </div>
      {/* sliver of the window behind */}
      <div className="flex w-1 flex-col bg-black">
        <div className="h-[18px] bg-[#f2f2f2]" />
        <div className="h-[18px] bg-[#f28a0f]" />
        <div className="h-[34px] border-y-2 border-white bg-[#c5d9f5]" />
        <div className="mt-auto mb-[55px] h-5 bg-[#264650]" />
      </div>
    </div>
  );
}
